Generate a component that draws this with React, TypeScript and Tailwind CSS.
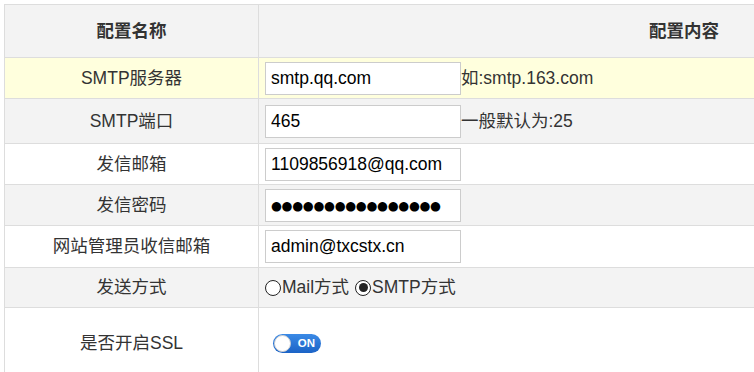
import React from "react";

const font = { fontFamily: '"Liberation Sans", "Noto Sans CJK SC", sans-serif' };

function Row({
  h,
  bg,
  label,
  children,
  bold,
}: {
  h: string;
  bg: string;
  label: string;
  children?: React.ReactNode;
  bold?: boolean;
}) {
  return (
    <div className={`flex border-b border-[#dddddd] ${h} ${bg}`}>
      <div
        className={`w-[254px] shrink-0 border-r border-[#dddddd] flex items-center justify-center ${
          bold ? "font-bold" : ""
        }`}
      >
        {label}
      </div>
      <div className="flex-1 flex items-center pl-[6px]">{children}</div>
    </div>
  );
}

function TextBox({ value, dots }: { value: string; dots?: boolean }) {
  return (
    <input
      readOnly
      value={value}
      className={`w-[196px] h-[33px] border border-[#cccccc] bg-white px-[5px] text-black outline-none ${
        dots ? "text-[12.5px] tracking-[-0.3px]" : "text-[17.5px]"
      }`}
      style={dots ? { fontFamily: '"DejaVu Sans", sans-serif' } : font}
    />
  );
}

function Radio({ checked }: { checked?: boolean }) {
  return (
    <span className="inline-flex w-[16px] h-[16px] rounded-full border-[1.5px] border-[#222] items-center justify-center mr-[1px] bg-white">
      {checked && <span className="w-[9px] h-[9px] rounded-full bg-[#222]" />}
    </span>
  );
}

export default function App() {
  return (
    <div
      className="w-[754px] h-[372px] overflow-hidden bg-white pt-[4px] pl-[4px] text-[17.5px] text-[#333333]"
      style={font}
    >
      <div className="w-[1105px] border-l border-t border-[#dddddd]">
        <div className="flex border-b border-[#dddddd] h-[53px] bg-[#f3f3f3] font-bold">
          <div className="w-[254px] shrink-0 border-r border-[#dddddd] flex items-center justify-center">
            配置名称
          </div>
          <div className="flex-1 flex items-center justify-center">配置内容</div>
        </div>
        <Row h="h-[41px]" bg="bg-[#ffffdd]" label="SMTP服务器">
          <TextBox value="smtp.qq.com" />
          <span>如:smtp.163.com</span>
        </Row>
        <Row h="h-[45px]" bg="bg-[#f3f3f3]" label="SMTP端口">
          <TextBox value="465" />
          <span>一般默认为:25</span>
        </Row>
        <Row h="h-[41px]" bg="bg-white" label="发信邮箱">
          <TextBox value="1109856918@qq.com" />
        </Row>
        <Row h="h-[41px]" bg="bg-[#f3f3f3]" label="发信密码">
          <TextBox value="●●●●●●●●●●●●●●●●" dots />
        </Row>
        <Row h="h-[42px]" bg="bg-white" label="网站管理员收信邮箱">
          <TextBox value="admin@txcstx.cn" />
        </Row>
        <Row h="h-[40px]" bg="bg-[#f3f3f3]" label="发送方式">
          <label className="inline-flex items-center">
            <Radio />
            <span>Mail方式</span>
          </label>
          <label className="inline-flex items-center ml-[6px]">
            <Radio checked />
            <span>SMTP方式</span>
          </label>
        </Row>
        <Row h="h-[72px]" bg="bg-white" label="是否开启SSL">
          <div className="ml-[8px] relative w-[48px] h-[19px] rounded-full bg-gradient-to-b from-[#3b8ae6] to-[#1b63c6] flex items-center">
            <span className="absolute left-[1px] top-[1px] w-[17px] h-[17px] rounded-full bg-white border border-[#d0d0d0]" />
            <span
              className="absolute right-[6px] top-0 h-[19px] flex items-center text-white font-bold text-[11.5px]"
              style={{ fontFamily: '"Liberation Sans", sans-serif' }}
            >
              ON
            </span>
          </div>
        </Row>
      </div>
    </div>
  );
}
